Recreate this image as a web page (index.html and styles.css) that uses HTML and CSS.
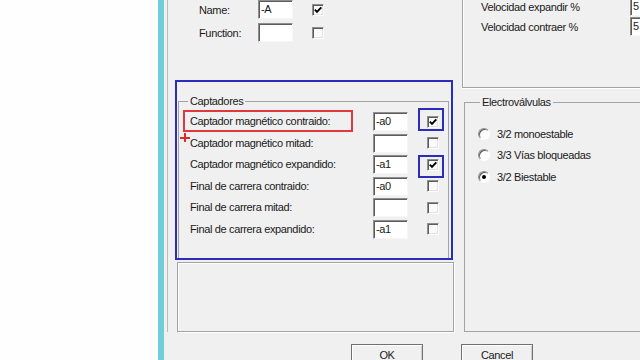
FILE: index.html
```html
<!DOCTYPE html>
<html lang="es">
<head>
<meta charset="utf-8">
<title>Cilindro</title>
<link rel="stylesheet" href="styles.css">
</head>
<body>
<div class="screen">
  <div class="desk"></div>
  <div class="edge"></div>
  <div class="dialog">
    <div class="cols">
      <div class="col-left">
        <div class="ident">
          <div class="frow"><span class="flbl">Name:</span><span class="tb">-A</span><span class="cb on"><svg viewBox="0 0 10 10"><path d="M1.8 4.6 L4 6.9 L8.3 2.4"/></svg></span></div>
          <div class="frow"><span class="flbl">Function:</span><span class="tb"></span><span class="cb"></span></div>
        </div>
        <div class="annot-blue">
          <fieldset class="group capt">
            <legend>Captadores</legend>
            <div class="srow"><span class="slbl">Captador magnético contraido:<span class="mark-red"></span><span class="cross"></span></span><span class="tb">-a0</span><span class="cb on hl"><svg viewBox="0 0 10 10"><path d="M1.8 4.6 L4 6.9 L8.3 2.4"/></svg></span></div>
            <div class="srow"><span class="slbl">Captador magnético mitad:</span><span class="tb"></span><span class="cb"></span></div>
            <div class="srow"><span class="slbl">Captador magnético expandido:</span><span class="tb">-a1</span><span class="cb on hl low"><svg viewBox="0 0 10 10"><path d="M1.8 4.6 L4 6.9 L8.3 2.4"/></svg></span></div>
            <div class="srow"><span class="slbl">Final de carrera contraido:</span><span class="tb">-a0</span><span class="cb"></span></div>
            <div class="srow"><span class="slbl">Final de carrera mitad:</span><span class="tb"></span><span class="cb"></span></div>
            <div class="srow"><span class="slbl">Final de carrera expandido:</span><span class="tb">-a1</span><span class="cb"></span></div>
          </fieldset>
        </div>
        <div class="panel-lower"></div>
      </div>
      <div class="col-right">
        <div class="speed">
          <div class="vrow"><span class="vlbl">Velocidad expandir %</span><span class="tb wide">5</span></div>
          <div class="vrow"><span class="vlbl">Velocidad contraer %</span><span class="tb wide">5</span></div>
        </div>
        <fieldset class="group valves">
          <legend>Electroválvulas</legend>
          <div class="rrow"><span class="rb"></span><span class="rlbl">3/2 monoestable</span></div>
          <div class="rrow"><span class="rb"></span><span class="rlbl">3/3 Vías bloqueadas</span></div>
          <div class="rrow"><span class="rb sel"><span class="dot"></span></span><span class="rlbl">3/2 Biestable</span></div>
        </fieldset>
      </div>
    </div>
    <div class="buttons">
      <span class="btn">OK</span>
      <span class="btn">Cancel</span>
    </div>
  </div>
</div>
</body>
</html>
```
FILE: styles.css
```css
* { box-sizing: border-box; }
html, body { margin: 0; padding: 0; }
body {
  font-family: "Liberation Sans", Arial, sans-serif;
  font-size: 11px;
  letter-spacing: -0.35px;
  color: #1a1a1a;
  background: #fff;
}
.screen {
  display: flex;
  width: 640px;
  height: 360px;
  overflow: hidden;
}
.desk { width: 158px; flex-shrink: 0; background: #fefefe; }
.edge { width: 6px; flex-shrink: 0; background: #70cdd9; }
.dialog {
  flex: 1;
  min-width: 0;
  background: #f0f0f0;
  padding-left: 3px;
  display: flex;
  flex-direction: column;
  overflow: hidden;
}
.cols {
  display: flex;
  height: 332px;
  flex-shrink: 0;
  border-left: 1px solid #bcbcbc;
  padding-left: 7px;
}
.col-left {
  width: 279px;
  flex-shrink: 0;
  display: flex;
  flex-direction: column;
}
.col-right {
  width: 190px;
  flex-shrink: 0;
  margin-left: 8px;
  display: flex;
  flex-direction: column;
}

/* common controls */
.tb {
  display: inline-block;
  width: 35px;
  height: 19px;
  flex-shrink: 0;
  background: #fff;
  border: 1px solid;
  border-color: #8e8e8e #f6f6f6 #f6f6f6 #8e8e8e;
  box-shadow: inset 1px 1px 0 #5c5c5c;
  padding-left: 2px;
  line-height: 17px;
  white-space: nowrap;
}
.tb.wide { width: 40px; }
.cb {
  position: relative;
  display: inline-flex;
  width: 12px;
  height: 12px;
  flex-shrink: 0;
  background: #fafafa;
  border: 1px solid;
  border-color: #8e8e8e #fff #fff #8e8e8e;
  box-shadow: inset 1px 1px 0 #5c5c5c, inset -1px -1px 0 #e2e2e2;
}
.cb svg { width: 10px; height: 10px; }
.cb svg path { fill: none; stroke: #000; stroke-width: 1.9; }
.rb {
  display: inline-flex;
  align-items: center;
  justify-content: center;
  width: 12px;
  height: 12px;
  flex-shrink: 0;
  border-radius: 50%;
  background: #fff;
  border: 1px solid;
  border-color: #8e8e8e #fff #fff #8e8e8e;
  box-shadow: inset 1px 1px 0 #5c5c5c;
}
.rb .dot { width: 4px; height: 4px; border-radius: 50%; background: #000; }

fieldset.group {
  margin: 0;
  padding: 0;
  min-width: 0;
  border: 1px solid #a3a3a3;
}
fieldset.group legend {
  padding: 0 2px;
  line-height: 13px;
}

/* top-left identity form */
.ident {
  height: 80px;
  flex-shrink: 0;
  padding-left: 24px;
  display: flex;
  flex-direction: column;
  gap: 4px;
}
.frow { display: flex; align-items: center; height: 19px; }
.flbl { width: 59px; flex-shrink: 0; }
.frow .cb { margin-left: 19px; }

/* annotated captadores block */
.annot-blue {
  height: 180px;
  width: 278px;
  flex-shrink: 0;
  border: 2px solid #2b2bbd;
  display: flex;
  flex-direction: column;
}
fieldset.capt {
  margin: 13px 2px 0 1px;
  height: 163px;
  border-bottom: none;
  padding: 4px 0 0 11px;
  display: flex;
  flex-direction: column;
  gap: 2.6px;
}
fieldset.capt legend { margin-left: -2px; }
.srow { display: flex; align-items: center; height: 19px; flex-shrink: 0; }
.slbl { position: relative; width: 183px; flex-shrink: 0; line-height: 19px; }
.srow .cb { margin-left: 19px; }
.cb.hl::after {
  content: "";
  position: absolute;
  left: -10px;
  right: -6px;
  top: -9px;
  bottom: -4px;
  border: 2px solid #2b2bbd;
}
.cb.hl.low::after { top: -5px; bottom: -8px; }
.mark-red {
  position: absolute;
  left: -7px;
  right: 20px;
  top: -2px;
  bottom: -1px;
  border: 2px solid #e0383c;
}
.cross {
  position: absolute;
  left: -10px;
  top: 21px;
  width: 10px;
  height: 9px;
  background:
    linear-gradient(#dd2a2a, #dd2a2a) center / 10px 2px no-repeat,
    linear-gradient(#dd2a2a, #dd2a2a) center / 2px 9px no-repeat;
}

.panel-lower {
  margin: 2px 0 0 2px;
  width: 277px;
  height: 70px;
  flex-shrink: 0;
  border: 1px solid #a3a3a3;
  box-shadow: inset 1px 1px 0 #fff, 1px 1px 0 #fff;
}

/* right column */
.speed {
  height: 88px;
  flex-shrink: 0;
  border-left: 1px solid #a3a3a3;
  border-bottom: 1px solid #a3a3a3;
  box-shadow: inset 1px 0 0 #fff, 0 1px 0 #fff;
  padding-left: 18px;
  display: flex;
  flex-direction: column;
  gap: 1px;
}
.vrow { display: flex; align-items: center; height: 19px; }
.vrow:first-child { margin-top: -3px; }
.vlbl { width: 149px; flex-shrink: 0; white-space: nowrap; }

fieldset.valves {
  margin: 8px 0 0 2px;
  height: 236px;
  width: 200px;
  padding: 14px 0 0 13px;
}
fieldset.valves legend { margin-left: 2px; }
.rrow { display: flex; align-items: center; height: 21.5px; }
.rlbl { margin-left: 7px; white-space: nowrap; }

/* buttons */
.buttons {
  display: flex;
  gap: 38px;
  margin-top: 12px;
  padding-left: 184px;
}
.btn {
  width: 72px;
  height: 23px;
  flex-shrink: 0;
  text-align: center;
  line-height: 21px;
  background: #f0f0f0;
  border: 1px solid #707070;
  box-shadow: inset 1px 1px 0 #fff, inset -1px -1px 0 #cfcfcf;
}
```
